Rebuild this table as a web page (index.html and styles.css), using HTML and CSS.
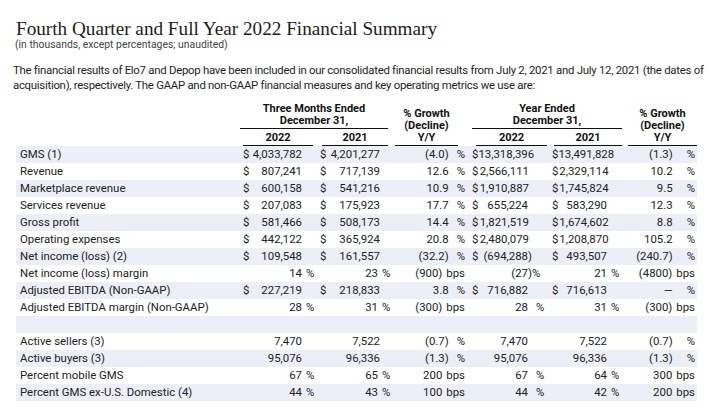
FILE: index.html
```html
<!DOCTYPE html>
<html lang="en">
<head>
<meta charset="utf-8">
<title>Fourth Quarter and Full Year 2022 Financial Summary</title>
<link rel="stylesheet" href="styles.css">
</head>
<body>
<header class="intro">
  <h1 class="title">Fourth Quarter and Full Year 2022 Financial Summary</h1>
  <p class="subtitle">(in thousands, except percentages; unaudited)</p>
  <p class="lead">The financial results of Elo7 and Depop have been included in our consolidated financial results from July 2, 2021 and July 12, 2021 (the dates of acquisition), respectively. The GAAP and non-GAAP financial measures and key operating metrics we use are:</p>
</header>

<section class="fin">
  <div class="head">
    <div class="h-group h-q"><span class="ul">Three Months Ended<br>December 31,</span></div>
    <div class="h-growth h-qg"><span class="ul">% Growth<br>(Decline)<br>Y/Y</span></div>
    <div class="h-group h-y"><span class="ul">Year Ended<br>December 31,</span></div>
    <div class="h-growth h-yg"><span class="ul">% Growth<br>(Decline)<br>Y/Y</span></div>
    <div class="h-year c-q22"><span class="ul">2022</span></div>
    <div class="h-year c-q21"><span class="ul">2021</span></div>
    <div class="h-year c-y22"><span class="ul">2022</span></div>
    <div class="h-year c-y21"><span class="ul">2021</span></div>
  </div>

  <div class="row">
    <div class="lbl">GMS (1)</div>
    <div class="v c-q22"><span class="cur">$</span><span class="num">4,033,782</span><span class="suf"></span></div>
    <div class="v c-q21"><span class="cur">$</span><span class="num">4,201,277</span><span class="suf"></span></div>
    <div class="g c-qg"><span class="num">(4.0)</span><span class="pct">%</span></div>
    <div class="v c-y22"><span class="cur">$</span><span class="num">13,318,396</span><span class="suf"></span></div>
    <div class="v c-y21"><span class="cur">$</span><span class="num">13,491,828</span><span class="suf"></span></div>
    <div class="g c-yg"><span class="num">(1.3)</span><span class="pct">%</span></div>
  </div>
  <div class="row">
    <div class="lbl">Revenue</div>
    <div class="v c-q22"><span class="cur">$</span><span class="num">807,241</span><span class="suf"></span></div>
    <div class="v c-q21"><span class="cur">$</span><span class="num">717,139</span><span class="suf"></span></div>
    <div class="g c-qg"><span class="num">12.6</span><span class="pct">%</span></div>
    <div class="v c-y22"><span class="cur">$</span><span class="num">2,566,111</span><span class="suf"></span></div>
    <div class="v c-y21"><span class="cur">$</span><span class="num">2,329,114</span><span class="suf"></span></div>
    <div class="g c-yg"><span class="num">10.2</span><span class="pct">%</span></div>
  </div>
  <div class="row">
    <div class="lbl">Marketplace revenue</div>
    <div class="v c-q22"><span class="cur">$</span><span class="num">600,158</span><span class="suf"></span></div>
    <div class="v c-q21"><span class="cur">$</span><span class="num">541,216</span><span class="suf"></span></div>
    <div class="g c-qg"><span class="num">10.9</span><span class="pct">%</span></div>
    <div class="v c-y22"><span class="cur">$</span><span class="num">1,910,887</span><span class="suf"></span></div>
    <div class="v c-y21"><span class="cur">$</span><span class="num">1,745,824</span><span class="suf"></span></div>
    <div class="g c-yg"><span class="num">9.5</span><span class="pct">%</span></div>
  </div>
  <div class="row">
    <div class="lbl">Services revenue</div>
    <div class="v c-q22"><span class="cur">$</span><span class="num">207,083</span><span class="suf"></span></div>
    <div class="v c-q21"><span class="cur">$</span><span class="num">175,923</span><span class="suf"></span></div>
    <div class="g c-qg"><span class="num">17.7</span><span class="pct">%</span></div>
    <div class="v c-y22"><span class="cur">$</span><span class="num">655,224</span><span class="suf"></span></div>
    <div class="v c-y21"><span class="cur">$</span><span class="num">583,290</span><span class="suf"></span></div>
    <div class="g c-yg"><span class="num">12.3</span><span class="pct">%</span></div>
  </div>
  <div class="row">
    <div class="lbl">Gross profit</div>
    <div class="v c-q22"><span class="cur">$</span><span class="num">581,466</span><span class="suf"></span></div>
    <div class="v c-q21"><span class="cur">$</span><span class="num">508,173</span><span class="suf"></span></div>
    <div class="g c-qg"><span class="num">14.4</span><span class="pct">%</span></div>
    <div class="v c-y22"><span class="cur">$</span><span class="num">1,821,519</span><span class="suf"></span></div>
    <div class="v c-y21"><span class="cur">$</span><span class="num">1,674,602</span><span class="suf"></span></div>
    <div class="g c-yg"><span class="num">8.8</span><span class="pct">%</span></div>
  </div>
  <div class="row">
    <div class="lbl">Operating expenses</div>
    <div class="v c-q22"><span class="cur">$</span><span class="num">442,122</span><span class="suf"></span></div>
    <div class="v c-q21"><span class="cur">$</span><span class="num">365,924</span><span class="suf"></span></div>
    <div class="g c-qg"><span class="num">20.8</span><span class="pct">%</span></div>
    <div class="v c-y22"><span class="cur">$</span><span class="num">2,480,079</span><span class="suf"></span></div>
    <div class="v c-y21"><span class="cur">$</span><span class="num">1,208,870</span><span class="suf"></span></div>
    <div class="g c-yg"><span class="num">105.2</span><span class="pct">%</span></div>
  </div>
  <div class="row">
    <div class="lbl">Net income (loss) (2)</div>
    <div class="v c-q22"><span class="cur">$</span><span class="num">109,548</span><span class="suf"></span></div>
    <div class="v c-q21"><span class="cur">$</span><span class="num">161,557</span><span class="suf"></span></div>
    <div class="g c-qg"><span class="num">(32.2)</span><span class="pct">%</span></div>
    <div class="v c-y22"><span class="cur">$</span><span class="num">(694,288</span><span class="suf">)</span></div>
    <div class="v c-y21"><span class="cur">$</span><span class="num">493,507</span><span class="suf"></span></div>
    <div class="g c-yg"><span class="num">(240.7)</span><span class="pct">%</span></div>
  </div>
  <div class="row">
    <div class="lbl">Net income (loss) margin</div>
    <div class="v c-q22"><span class="cur"></span><span class="num">14</span><span class="suf sp">%</span></div>
    <div class="v c-q21"><span class="cur"></span><span class="num">23</span><span class="suf sp">%</span></div>
    <div class="g c-qg"><span class="num">(900)</span><span class="bps">bps</span></div>
    <div class="v c-y22"><span class="cur"></span><span class="num">(27</span><span class="suf">)%</span></div>
    <div class="v c-y21"><span class="cur"></span><span class="num">21</span><span class="suf sp">%</span></div>
    <div class="g c-yg"><span class="num">(4800)</span><span class="bps">bps</span></div>
  </div>
  <div class="row">
    <div class="lbl">Adjusted EBITDA (Non-GAAP)</div>
    <div class="v c-q22"><span class="cur">$</span><span class="num">227,219</span><span class="suf"></span></div>
    <div class="v c-q21"><span class="cur">$</span><span class="num">218,833</span><span class="suf"></span></div>
    <div class="g c-qg"><span class="num">3.8</span><span class="pct">%</span></div>
    <div class="v c-y22"><span class="cur">$</span><span class="num">716,882</span><span class="suf"></span></div>
    <div class="v c-y21"><span class="cur">$</span><span class="num">716,613</span><span class="suf"></span></div>
    <div class="g c-yg"><span class="num">—</span><span class="pct">%</span></div>
  </div>
  <div class="row">
    <div class="lbl">Adjusted EBITDA margin (Non-GAAP)</div>
    <div class="v c-q22"><span class="cur"></span><span class="num">28</span><span class="suf sp">%</span></div>
    <div class="v c-q21"><span class="cur"></span><span class="num">31</span><span class="suf sp">%</span></div>
    <div class="g c-qg"><span class="num">(300)</span><span class="bps">bps</span></div>
    <div class="v c-y22"><span class="cur"></span><span class="num">28</span><span class="suf sp">%</span></div>
    <div class="v c-y21"><span class="cur"></span><span class="num">31</span><span class="suf sp">%</span></div>
    <div class="g c-yg"><span class="num">(300)</span><span class="bps">bps</span></div>
  </div>
  <div class="row"></div>
  <div class="row">
    <div class="lbl">Active sellers (3)</div>
    <div class="v c-q22"><span class="cur"></span><span class="num">7,470</span><span class="suf"></span></div>
    <div class="v c-q21"><span class="cur"></span><span class="num">7,522</span><span class="suf"></span></div>
    <div class="g c-qg"><span class="num">(0.7)</span><span class="pct">%</span></div>
    <div class="v c-y22"><span class="cur"></span><span class="num">7,470</span><span class="suf"></span></div>
    <div class="v c-y21"><span class="cur"></span><span class="num">7,522</span><span class="suf"></span></div>
    <div class="g c-yg"><span class="num">(0.7)</span><span class="pct">%</span></div>
  </div>
  <div class="row">
    <div class="lbl">Active buyers (3)</div>
    <div class="v c-q22"><span class="cur"></span><span class="num">95,076</span><span class="suf"></span></div>
    <div class="v c-q21"><span class="cur"></span><span class="num">96,336</span><span class="suf"></span></div>
    <div class="g c-qg"><span class="num">(1.3)</span><span class="pct">%</span></div>
    <div class="v c-y22"><span class="cur"></span><span class="num">95,076</span><span class="suf"></span></div>
    <div class="v c-y21"><span class="cur"></span><span class="num">96,336</span><span class="suf"></span></div>
    <div class="g c-yg"><span class="num">(1.3)</span><span class="pct">%</span></div>
  </div>
  <div class="row">
    <div class="lbl">Percent mobile GMS</div>
    <div class="v c-q22"><span class="cur"></span><span class="num">67</span><span class="suf sp">%</span></div>
    <div class="v c-q21"><span class="cur"></span><span class="num">65</span><span class="suf sp">%</span></div>
    <div class="g c-qg"><span class="num">200</span><span class="bps">bps</span></div>
    <div class="v c-y22"><span class="cur"></span><span class="num">67</span><span class="suf sp">%</span></div>
    <div class="v c-y21"><span class="cur"></span><span class="num">64</span><span class="suf sp">%</span></div>
    <div class="g c-yg"><span class="num">300</span><span class="bps">bps</span></div>
  </div>
  <div class="row">
    <div class="lbl">Percent GMS ex-U.S. Domestic (4)</div>
    <div class="v c-q22"><span class="cur"></span><span class="num">44</span><span class="suf sp">%</span></div>
    <div class="v c-q21"><span class="cur"></span><span class="num">43</span><span class="suf sp">%</span></div>
    <div class="g c-qg"><span class="num">100</span><span class="bps">bps</span></div>
    <div class="v c-y22"><span class="cur"></span><span class="num">44</span><span class="suf sp">%</span></div>
    <div class="v c-y21"><span class="cur"></span><span class="num">42</span><span class="suf sp">%</span></div>
    <div class="g c-yg"><span class="num">200</span><span class="bps">bps</span></div>
  </div>
</section>
</body>
</html>
```

FILE: styles.css
```css
html, body {
  margin: 0;
  padding: 0;
  background: #ffffff;
}

body {
  color: #222222;
  font-family: Roboto, "Liberation Sans", sans-serif;
  width: 709px;
  height: 409px;
  overflow: hidden;
}

.intro {
  padding: 19px 0 0 0;
}

.title {
  margin: 0;
  padding-left: 16px;
  font-family: "Liberation Serif", "DejaVu Serif", serif;
  font-weight: normal;
  font-size: 19.2px;
  line-height: 20px;
  color: #1c1c1c;
}

.subtitle {
  margin: 0;
  padding-left: 15px;
  font-size: 10.4px;
  line-height: 11px;
  letter-spacing: 0;
  color: #444444;
}

.lead {
  margin: 13px 0 0 0;
  padding-left: 13px;
  width: 692px;
  font-size: 11.4px;
  line-height: 15px;
  letter-spacing: -0.27px;
  color: #1e1e1e;
}

.fin {
  margin: 10px 0 0 16px;
  width: 681px;
  font-size: 11.4px;
}

.head,
.row {
  display: grid;
  grid-template-columns: 224px 75px 75px 78px 81px 75px 73px;
}

.head {
  grid-template-rows: auto auto;
  font-weight: bold;
  font-size: 11px;
  line-height: 11.5px;
  text-align: center;
  color: #111111;
}

.head .ul {
  display: block;
  border-bottom: 1px solid #111111;
}

.h-group {
  grid-row: 1;
}
.h-group .ul {
  padding-bottom: 2px;
}
.h-q {
  grid-column: 2 / 4;
}
.h-q .ul {
  margin: 0 2px 0 0;
}
.h-y {
  grid-column: 5 / 7;
}
.h-y .ul {
  margin: 0 2px 0 4px;
}

.h-growth {
  grid-row: 1 / 3;
  display: flex;
  flex-direction: column;
  justify-content: flex-end;
}
.h-growth .ul {
  line-height: 12px;
  padding-bottom: 1px;
}
.h-qg {
  grid-column: 4;
}
.h-qg .ul {
  margin: 0 10px 0 5px;
}
.h-yg {
  grid-column: 7;
}
.h-yg .ul {
  margin: 0 0 0 4px;
}

.h-year {
  grid-row: 2;
  padding-top: 3px;
}
.h-year .ul {
  line-height: 12px;
  padding-bottom: 1px;
}
.h-year.c-q22 { grid-column: 2; }
.h-year.c-q21 { grid-column: 3; }
.h-year.c-y22 { grid-column: 5; }
.h-year.c-y21 { grid-column: 6; }

.h-year.c-q22 .ul { margin: 0 2px 0 0; }
.h-year.c-q21 .ul { margin: 0 2px 0 2px; }
.h-year.c-y22 .ul { margin: 0 2px 0 4px; }
.h-year.c-y21 .ul { margin: 0 2px 0 2px; }

.row {
  height: 17px;
  line-height: 17px;
  color: #222222;
  background: #ffffff;
}
.row:nth-child(even) {
  background: #eceff7;
}

.lbl {
  padding-left: 4px;
  white-space: nowrap;
}

.v {
  display: flex;
  white-space: nowrap;
}
.v .cur {
  width: 8px;
}
.v .num {
  flex: 1;
  text-align: right;
}
.v .suf {
  width: 13px;
  text-align: left;
}
.v .suf.sp {
  padding-left: 4px;
  width: 9px;
}

.c-q22 { padding-left: 3px; }
.c-q21 { padding-left: 5px; }
.v.c-q21 .suf { width: 10px; }
.v.c-q21 .suf.sp { width: 8px; padding-left: 4px; }
.c-y22 { padding-left: 4px; }
.v.c-y22 .suf { width: 21px; }
.v.c-y22 .suf.sp { width: 13px; padding-left: 8px; }
.c-y21 { padding-left: 3px; }
.v.c-y21 .suf { width: 17px; }
.v.c-y21 .suf.sp { width: 13px; padding-left: 4px; }

.g {
  display: flex;
  justify-content: flex-end;
  white-space: nowrap;
}
.g .pct {
  margin-left: 8px;
}
.g .bps {
  margin-left: 4px;
}
.c-qg {
  padding-right: 3px;
}
.c-yg {
  padding-right: 2px;
}
.c-yg .pct {
  margin-left: 14px;
}
```
